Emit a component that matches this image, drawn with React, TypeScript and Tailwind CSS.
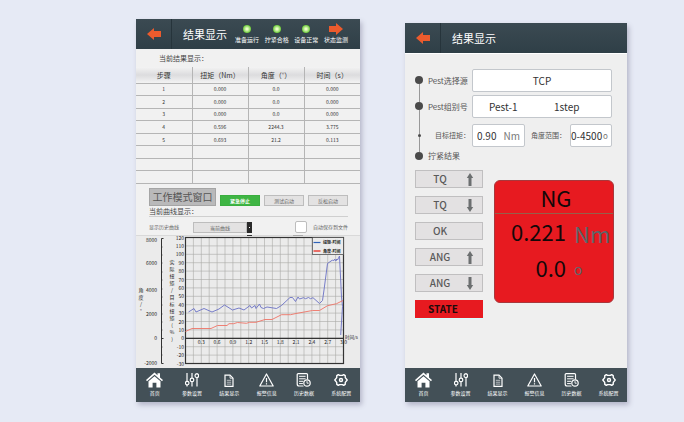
import type { ReactNode } from 'react'

const SANS = "font-['Noto_Sans_CJK_SC','Noto_Sans',sans-serif]"

const rows = [
  ['1', '0.000', '0.0', '0.000'],
  ['2', '0.000', '0.0', '0.000'],
  ['3', '0.000', '0.0', '0.000'],
  ['4', '0.596', '2244.3', '3.775'],
  ['5', '0.693', '21.2', '0.113'],
  ['', '', '', ''],
  ['', '', '', ''],
  ['', '', '', ''],
]

function Arrow({ right = false }: { right?: boolean }) {
  return (
    <svg viewBox="0 0 14 12" className={right ? 'w-3.5 h-3 rotate-180' : 'w-3.5 h-3'} aria-hidden>
      <path d="M0 6 L7 0 V3 H14 V9 H7 V12 Z" fill="#ec5b2d" />
    </svg>
  )
}

function HomeIcon() {
  return (
    <svg viewBox="0 0 17 16" className="h-4 w-[17px]" fill="#fff" aria-hidden>
      <path d="M0 8 L8.500 0.500 L11.500 3.200 V1.200 H14 V5.500 L17 8 L16 9.200 L8.500 2.800 L1 9.200 Z" />
      <path d="M2.500 9.200 L8.500 4.200 L14.500 9.200 V15.600 H10.400 V10.800 H6.600 V15.600 H2.500 Z" />
    </svg>
  )
}

function SlidersIcon() {
  return (
    <svg viewBox="0 0 14 16" className="h-4 w-3.5" fill="none" stroke="#fff" strokeWidth="1.2" aria-hidden>
      <path d="M2 1 V9.200 M2 13 V14.500 M7 1 V6 M7 9.800 V14.500 M12 1 V1.800 M12 5.600 V14.500" />
      <circle cx="2.200" cy="11.100" r="1.800" />
      <circle cx="7" cy="7.900" r="1.800" />
      <circle cx="11.800" cy="3.700" r="1.800" />
    </svg>
  )
}

function FileIcon() {
  return (
    <svg viewBox="0 0 10 16" className="h-4 w-2.5" fill="none" stroke="#fff" strokeWidth="1.200" aria-hidden>
      <path d="M1 3.200 H6 L9 6.200 V14.400 H1 Z" />
      <path d="M6 3.200 V6.200 H9" strokeWidth="0.800" />
      <path d="M2.800 8.300 H7.200 M2.800 10.200 H7.200 M2.800 12.100 H7.200" strokeWidth="0.900" stroke="#c9cdd0" />
    </svg>
  )
}

function WarningIcon() {
  return (
    <svg viewBox="0 0 15 16" className="h-4 w-[15px]" fill="none" stroke="#fff" strokeWidth="1.200" strokeLinejoin="round" aria-hidden>
      <path d="M7.500 2 L14.200 14 H0.800 Z" />
      <path d="M7.500 6 V10.200 M7.500 11.300 V12.500" />
    </svg>
  )
}

function HistoryIcon() {
  return (
    <svg viewBox="0 0 15 16" className="h-4 w-[15px]" fill="none" stroke="#fff" strokeWidth="1.200" strokeLinecap="round" aria-hidden>
      <path d="M11.500 7 V2.600 Q11.500 1.600 10.500 1.600 H2.200 Q1.200 1.600 1.200 2.600 V12 Q1.200 14 3 14 H7" />
      <path d="M3.500 4.300 H9.200 M3.500 6.800 H9.200 M3.500 9.300 H7 M3.500 11.600 H6.500" strokeWidth="1" />
      <circle cx="11" cy="11" r="3.200" />
      <path d="M11 9.500 V11.200 H12.300" strokeWidth="0.900" />
    </svg>
  )
}

function GearIcon() {
  return (
    <svg viewBox="0 0 14 16" className="h-4 w-3.5" fill="none" stroke="#fff" strokeWidth="1.400" strokeLinejoin="round" aria-hidden>
      <path d="M4.300 2.600 L5.600 3.400 H8.400 L9.700 2.600 L11.200 3.600 L11.300 5.600 L13.200 8 L11.300 10.400 L11.200 12.400 L9.700 13.400 L8.400 12.600 H5.600 L4.300 13.400 L2.800 12.400 L2.700 10.400 L0.800 8 L2.700 5.600 L2.800 3.600 Z" />
      <circle cx="7" cy="8" r="1.500" />
    </svg>
  )
}

const navItems: { label: string; icon: ReactNode }[] = [
  { label: '首页', icon: <HomeIcon /> },
  { label: '参数设置', icon: <SlidersIcon /> },
  { label: '结果显示', icon: <FileIcon /> },
  { label: '报警信息', icon: <WarningIcon /> },
  { label: '历史数据', icon: <HistoryIcon /> },
  { label: '系统配置', icon: <GearIcon /> },
]

function NavBar() {
  return (
    <nav className="grid h-[34px] grid-cols-6 bg-[#435057] pt-1">
      {navItems.map(item => (
        <a key={item.label} href="#" className="flex flex-col items-center gap-px">
          {item.icon}
          <span className="text-[5px] leading-[8px] text-white whitespace-nowrap">{item.label}</span>
        </a>
      ))}
    </nav>
  )
}

function TopBar({ children }: { children?: ReactNode }) {
  return (
    <header className="flex h-[30px] items-stretch bg-linear-to-b from-[#3b4a52] to-[#2f3f47]">
      <button type="button" aria-label="返回" className="flex w-9 items-center justify-center border-r border-[#26343b]">
        <Arrow />
      </button>
      <h1 className="self-center pl-[11px] text-[11px] leading-4 text-white whitespace-nowrap">结果显示</h1>
      {children}
    </header>
  )
}

function Indicator({ label, children }: { label: string; children: ReactNode }) {
  return (
    <div className="flex flex-col items-center">
      <div className="flex h-3 items-center">{children}</div>
      <span className="text-[6px] leading-[10px] text-white whitespace-nowrap">{label}</span>
    </div>
  )
}

function Lamp() {
  return <div className="size-2 rounded-full bg-radial from-[#e9ffc4] from-15% to-[#5cc31d] to-75%" />
}

const torque =
  '52.5,77 58,73.5 60,77 68,73.5 76,77 83,74 88.5,70 96.5,75 103,73 108,75 114,70.5 115.500,73 119,70.500 120,73.500 123.500,69 125,72.500 127.500,73.500 131,72 140.500,73.500 145.500,70.500 154,62.500 156.500,62.500 159.500,66.500 162,62 163.500,64 167.500,62.700 169.500,63.700 172.500,62.500 174.500,63.700 177,62.700 183.500,68.500 186.500,65.500 188,55 191.500,28.500 196.500,25 197.500,26 198.700,24 200,26 200.700,24 201.500,25 203.500,21 205.500,62 206.500,71.500 204.700,100'
const angle =
  '49.500,96.500 56,93.500 75,93.500 81.500,90.500 91,90.500 93,88.700 97.500,88.700 101.500,87.500 110.500,88.300 113.500,87.300 120,87.300 129,84.500 136,84.500 145.500,79.700 154.500,79.700 160,78.500 176.500,75.500 183.500,75.500 191.500,70.700 200.500,68.700 207,65.500'

const percentTicks = [120, 110, 100, 90, 80, 70, 60, 50, 40, 30, 20, 10, 0, -10, -20, -30]
const angleTicks: [string, number][] = [['8000', 5], ['6000', 28], ['4000', 55], ['2000', 79], ['0', 103], ['-2000', 128]]
const timeTicks = ['0.3', '0.6', '0.9', '1.2', '1.5', '1.8', '2.1', '2.4', '2.7', '3.0']

const GRID = { left: 49.5, right: 207.5, top: 2.5, bottom: 128.5 }
const stepX = (GRID.right - GRID.left) / 20
const stepY = (GRID.bottom - GRID.top) / 15

function Chart() {
  return (
    <svg viewBox="0 0 224 133" className="block w-full bg-[#ebebeb]" fontSize="5" fill="#222" role="img" aria-label="曲线">
      <path d="M0 0.500 H224" stroke="#d9d9d9" />
      <path d="M111 0 H116" stroke="#333" strokeWidth="2" />
      <path d="M157 0.500 H167" stroke="#aaa" />
      <g stroke="#a9aaa6" strokeWidth="0.600">
        {Array.from({ length: 19 }, (_, i) => (
          <line key={i} x1={GRID.left + stepX * (i + 1)} x2={GRID.left + stepX * (i + 1)} y1={GRID.top} y2={GRID.bottom} />
        ))}
        {Array.from({ length: 14 }, (_, i) => (
          <line key={i} y1={GRID.top + stepY * (i + 1)} y2={GRID.top + stepY * (i + 1)} x1={GRID.left} x2={GRID.right} />
        ))}
      </g>
      <g fill="none" stroke="#333">
        <rect x={GRID.left} y={GRID.top} width={GRID.right - GRID.left} height={GRID.bottom - GRID.top} strokeWidth="1.200" />
        <path d="M49.500 103.300 H207.500" strokeWidth="1.200" />
        <path d="M27.500 3.500 H25.500 V128.500 H27.500 M25.500 103.500 H27.500" />
        <path d="M25.500 12 H26.700 M25.500 20 H26.700 M25.500 28 H26.700 M25.500 37 H26.700 M25.500 45 H26.700 M25.500 54 H26.700 M25.500 62 H26.700 M25.500 70 H26.700 M25.500 79 H26.700 M25.500 87 H26.700 M25.500 95 H26.700 M25.500 112 H26.700 M25.500 120 H26.700" strokeWidth="0.500" />
      </g>
      <g textAnchor="end">
        {percentTicks.map((t, i) => (
          <text key={t} x="48" y={GRID.top + stepY * i + 2}>{t}</text>
        ))}
        {angleTicks.map(([t, y]) => (
          <text key={t} x="21" y={y + 2}>{t}</text>
        ))}
      </g>
      <g textAnchor="middle">
        {timeTicks.map((t, i) => (
          <text key={t} x={GRID.left + stepX * 2 * (i + 1)} y="109">{t}</text>
        ))}
        {[...'实际扭矩/目标扭矩(%)'].map((c, i) => (
          <text key={i} x="36" y={29 + i * 7}>{c}</text>
        ))}
        {[...'角度/°'].map((c, i) => (
          <text key={i} x="5" y={57 + i * 7}>{c}</text>
        ))}
      </g>
      <text x="209" y="104" fontSize="4.500">时间/s</text>
      <polyline points={torque} fill="none" stroke="#6a70c4" strokeWidth="0.900" />
      <polyline points={angle} fill="none" stroke="#ee7466" strokeWidth="0.900" />
      <rect x="176.500" y="2.500" width="31" height="17" fill="#ebebeb" stroke="#444" strokeWidth="0.700" />
      <path d="M177.500 7.500 H184.500" stroke="#2e62b8" strokeWidth="1.200" />
      <path d="M177.500 16 H184.500" stroke="#e8382f" strokeWidth="1.400" />
      <g fontSize="4" fontWeight="700">
        <text x="187" y="9">扭矩-时间</text>
        <text x="187" y="17.500">角度-时间</text>
      </g>
    </svg>
  )
}

function CurveScreen() {
  const modeButton = 'h-[11px] w-10 text-[5px] leading-[9px] border'
  return (
    <section className="flex flex-col bg-[#f1f1f1] shadow-[2px_3px_5px_#b4b5c8]">
      <TopBar>
        <div className="ml-2 flex flex-1 items-center justify-between pr-3">
          <Indicator label="准备运行"><Lamp /></Indicator>
          <Indicator label="拧紧合格"><Lamp /></Indicator>
          <Indicator label="设备正常"><Lamp /></Indicator>
          <Indicator label="状态监测"><Arrow right /></Indicator>
        </div>
      </TopBar>
      <h2 className="h-[18px] pl-[23px] text-[7px] leading-[18px] text-[#444]">当前结果显示：</h2>
      <table className="h-[117px] w-full table-fixed border-collapse text-center text-[#333]">
        <thead>
          <tr className="h-4 bg-linear-to-b from-[#f3f3f3] via-[#dcdcde] to-[#f3f3f3] text-[7px] leading-[14px]">
            {['步骤', '扭矩（Nm）', '角度（°）', '时间（s）'].map(h => (
              <th key={h} className="border-r border-b border-[#b5b5b5] p-0 font-normal last:border-r-0 whitespace-nowrap">{h}</th>
            ))}
          </tr>
        </thead>
        <tbody className="text-[5px] leading-[10px]">
          {rows.map((row, i) => (
            <tr key={i}>
              {row.map((cell, j) => (
                <td key={j} className="border-r border-b border-[#b5b5b5] p-0 last:border-r-0">{cell || '\u00a0'}</td>
              ))}
            </tr>
          ))}
        </tbody>
      </table>

      <div className="h-[51px] pt-1 pl-[13px] pr-3">
        <div className="flex items-end justify-between">
          <button type="button" className="h-[18px] w-[67px] border border-[#a5a5a5] bg-[#b9b9ba] text-[10px] leading-4 text-[#555] whitespace-nowrap">
            工作模式窗口
          </button>
          <button type="button" className={`${modeButton} border-[#3aae3f] bg-[#3fb544] font-bold text-white`}>紧急停止</button>
          <button type="button" className={`${modeButton} border-[#bdbdbd] bg-[#e3e2e2] text-[#666]`}>测试启动</button>
          <button type="button" className={`${modeButton} border-[#bdbdbd] bg-[#e3e2e2] text-[#666]`}>反松启动</button>
        </div>
        <h2 className="border-b border-[#cfcfcf] text-[7px] leading-[10px] text-[#444]">当前曲线显示：</h2>
        <div className="flex items-center pt-1 text-[5px] leading-[10px] text-[#666]">
          <label htmlFor="curve" className="w-11">显示历史曲线</label>
          <select id="curve" className="h-[11px] w-[54px] appearance-none border border-[#bdbdbd] bg-[#e3e2e2] p-0 [text-align-last:center]">
            <option>当前曲线</option>
          </select>
          <button type="button" aria-label="展开" className="flex h-[11px] w-[5px] items-center justify-center bg-[#2b2b2b]">
            <span className="size-px bg-white" />
          </button>
          <label className="ml-auto flex items-center gap-1.5">
            <input type="checkbox" className="size-3 appearance-none rounded-xs border border-[#bdbdbd] bg-white" />
            自动保存到文件
          </label>
        </div>
      </div>
      <Chart />
      <NavBar />
    </section>
  )
}

const box = 'flex h-[23px] items-center rounded-xs border border-[#c3c7cc] bg-white text-[10px] text-[#333]'

function Dot() {
  return <div className="size-2 rounded-full bg-[#4a4a4a]" />
}

function StateButton({ label, arrow }: { label: string; arrow?: 'up' | 'down' }) {
  return (
    <button type="button" className="flex h-[18px] w-full items-center border border-[#c0bfc0] bg-[#e3e1e2] text-[10px] leading-4 font-medium text-[#5a5a5a]">
      <span className="w-12 text-center">{label}</span>
      {arrow && (
        <svg viewBox="0 0 8 13" className={arrow === 'up' ? 'ml-0.5 h-[13px] w-2' : 'ml-0.5 h-[13px] w-2 rotate-180'} aria-hidden>
          <path d="M4 0 L7.200 5 H5.500 V13 H2.500 V5 H0.800 Z" fill="#6c6f70" />
        </svg>
      )}
    </button>
  )
}

function ResultScreen() {
  return (
    <section className="mt-1 flex flex-col bg-[#efefef] shadow-[2px_3px_5px_#b4b5c8]">
      <TopBar />
      <div className="flex-1 border-t border-white pt-[15px] pr-[13px] pl-2.5">
        <div className="flex gap-[5px] pr-0.5">
          <div className="flex flex-col items-center pt-[7px]">
            <Dot />
            <div className="h-[18px] w-px bg-[#999]" />
            <Dot />
            <div className="h-6 w-px bg-[#999]" />
            <div className="size-[3px] rounded-full bg-[#4a4a4a]" />
            <div className="h-[15px] w-px bg-[#999]" />
            <Dot />
          </div>
          <div className="min-w-0 flex-1 text-[8px] text-[#555]">
            <div className="flex items-center">
              <label htmlFor="source" className="w-11 whitespace-nowrap">Pest选择源</label>
              <input id="source" defaultValue="TCP" className={`${box} min-w-0 flex-1 text-center`} />
            </div>
            <div className="mt-[3px] flex items-center">
              <label htmlFor="group" className="w-11 whitespace-nowrap">Pest组别号</label>
              <div className={`${box} min-w-0 flex-1`}>
                <input id="group" defaultValue="Pest-1" className="w-1/2 pl-4 outline-none" />
                <input aria-label="step" defaultValue="1step" className="w-1/2 pl-3 outline-none" />
              </div>
            </div>
            <div className="mt-1.5 flex items-center text-[7px]">
              <label htmlFor="torque" className="w-11 pl-[7px] whitespace-nowrap">目标扭矩：</label>
              <div className={`${box} w-[53px] justify-between px-1`}>
                <input id="torque" defaultValue="0.90" className="w-6 outline-none" />
                <span className="text-[#777]">Nm</span>
              </div>
              <label htmlFor="range" className="flex-1 pl-1.5 whitespace-nowrap">角度范围：</label>
              <div className={`${box} w-[42px]`}>
                <input id="range" defaultValue="0-4500" className="w-8 outline-none" />
                <span className="text-[8px] text-[#777]">o</span>
              </div>
            </div>
            <h2 className="leading-[18px]">拧紧结果</h2>
          </div>
        </div>

        <div className="mt-[5px] flex items-start gap-[11px] pb-6">
          <div className="flex w-[68px] flex-col gap-2">
            <StateButton label="TQ" arrow="up" />
            <StateButton label="TQ" arrow="down" />
            <StateButton label="OK" />
            <StateButton label="ANG" arrow="up" />
            <StateButton label="ANG" arrow="down" />
            <button type="button" className="h-[18px] bg-[#e71a20] pr-3 text-[10px] leading-4 font-bold text-[#1c0c0c] shadow-[0_1px_1px_#d5ffff]">
              STATE
            </button>
          </div>
          <div className="mt-2.5 min-w-0 flex-1 rounded-md border border-[#a8383c] bg-[#e71a20] pb-4 text-[22px] text-[#140809]">
            <p className="border-b border-[#96604a] pl-1 text-center leading-8">NG</p>
            <p className="flex gap-2 leading-[34px]">
              <span className="w-[71px] text-right">0.221</span>
              <span className="pt-0.5 text-[#5b666a]">Nm</span>
            </p>
            <p className="flex gap-2 leading-[34px]">
              <span className="w-[71px] text-right">0.0</span>
              <span className="pt-0.5 text-[14px] text-[#5b666a]">o</span>
            </p>
          </div>
        </div>
      </div>
      <NavBar />
    </section>
  )
}

export default function App() {
  return (
    <main className={`${SANS} min-h-screen bg-[#e6eaf5] pt-[19px] pr-[57px] pb-5 pl-[136px]`}>
      <div className="grid grid-cols-[224fr_222fr] gap-[45px]">
        <CurveScreen />
        <ResultScreen />
      </div>
    </main>
  )
}
